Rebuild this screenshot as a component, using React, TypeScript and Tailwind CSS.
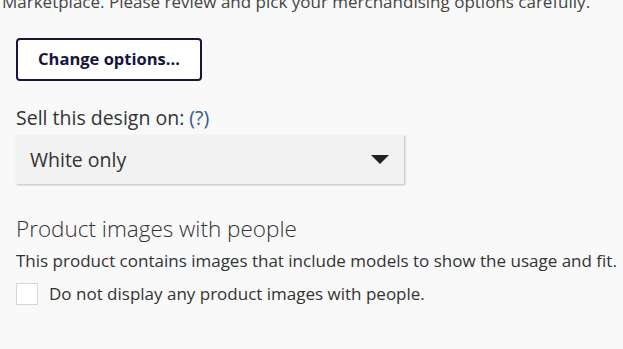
import React from 'react';

export default function App() {
  return (
    <div className="min-h-screen w-[623px] h-[349px] overflow-hidden bg-[#f9f9f9] text-[#333] font-['Open_Sans',sans-serif]">
      <div className="pl-0.5 pr-4">
        <p className="-mt-[9px] whitespace-nowrap text-[17px] leading-[22px] text-[#444]">
          Marketplace. Please review and pick your merchandising options carefully.
        </p>
      </div>

      <div className="px-4">
        <button className="mt-[25px] h-[43px] w-[186px] rounded-[4px] border-2 border-[#15153d] bg-white text-[16.5px] font-bold text-[#15153d]">
          Change options...
        </button>

        <div className="mt-[24px] text-[19.5px] leading-[26px] text-[#333]">
          Sell this design on: <span className="text-[#2f5a8c]">(?)</span>
        </div>

        <div className="mt-[4px] flex h-[49px] w-[388px] items-center justify-between bg-[#f2f2f2] pl-[14px] pr-[15px] text-[19.5px] text-[#333] shadow-[1px_1px_2px_rgba(0,0,0,0.25)]">
          <span>White only</span>
          <svg width="18" height="9" viewBox="0 0 18 9">
            <path d="M0 0 L18 0 L9 9 Z" fill="#222" />
          </svg>
        </div>

        <h2 className="mt-[30px] text-[22.5px] font-light leading-[30px] text-[#333]">
          Product images with people
        </h2>

        <p className="mt-[5px] whitespace-nowrap text-[17px] leading-[23px] text-[#333]">
          This product contains images that include models to show the usage and fit.
        </p>

        <label className="mt-[9px] flex items-center gap-[11px]">
          <span className="h-[22px] w-[22px] border border-[#d6d6d6] bg-white" />
          <span className="text-[17px] text-[#333]">Do not display any product images with people.</span>
        </label>
      </div>
    </div>
  );
}
